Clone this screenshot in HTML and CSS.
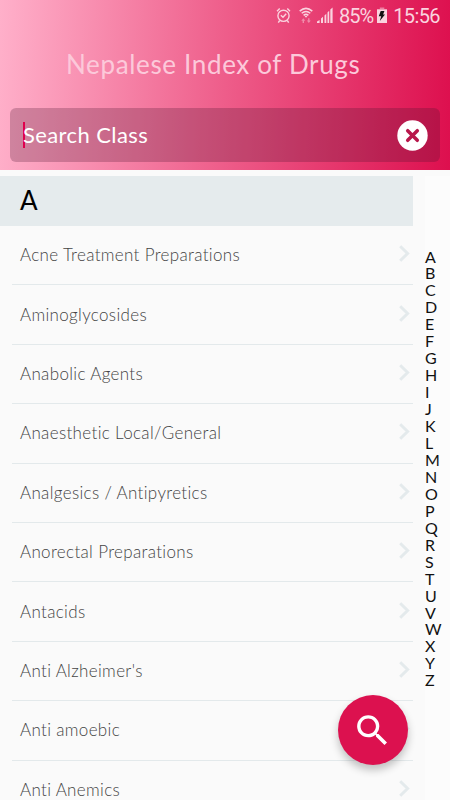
FILE: index.html
```html
<!DOCTYPE html>
<html lang="en">
<head>
    <meta charset="UTF-8">
    <meta name="viewport" content="width=device-width, initial-scale=1.0">
    <title>Nepalese Index of Drugs</title>
    <link rel="stylesheet" href="styles.css">
</head>
<body>
    <div class="app">
        <header class="header">
            <!-- Status bar -->
            <div class="status-bar">
                <svg class="icon-alarm" width="15" height="17" viewBox="0 0 15 17" fill="none" stroke="currentColor" stroke-width="1.4">
                    <circle cx="7.5" cy="8.8" r="5.6"/>
                    <path d="M1 4.2L3.7 1.6M14 4.2L11.3 1.6M3.7 13.5L2.3 15.6M11.3 13.5L12.7 15.6M4.8 8.3L7 10.3L10.2 6.8"/>
                </svg>
                <svg class="icon-wifi" width="14" height="17" viewBox="0 0 14 17" fill="none" stroke="currentColor" stroke-width="1.5">
                    <path d="M.7 4.1Q7 -1.4 13.3 4.1M2.7 6.3Q7 2.6 11.3 6.3M4.6 8.4Q7 6.4 9.4 8.4"/>
                    <path d="M5.6 9L7 10.7L8.4 9Z" fill="currentColor" stroke="none"/>
                    <path d="M2.3 13.8L4.3 11.2L6.3 13.8H5V16H3.6V13.8ZM7.8 13.4H9.1V11.2H10.5V13.4H11.8L9.8 16Z" fill="currentColor" stroke="none" opacity=".5"/>
                </svg>
                <svg class="icon-signal" width="16" height="17" viewBox="0 0 16 17" fill="currentColor">
                    <path d="M0 16V14.6L2.6 13V16ZM4 16V11.6L6 9.8V16ZM7.5 16V8.4L9.3 6.7V16ZM10.5 16V5.4L12.2 3.7V16ZM13.3 16V2.6L15.6 .6V16Z"/>
                </svg>
                <span class="battery-level">85%</span>
                <svg class="icon-battery" width="10" height="17" viewBox="0 0 10 17">
                    <path d="M2.8 .5H7.3V2H2.8Z" fill="currentColor" opacity=".5"/>
                    <path d="M0 2.3H10V16H0Z" fill="currentColor"/>
                    <path d="M3.7 4H7.4L6.1 7.4H8L2.8 14L4.2 9.3H1.8Z" fill="#111"/>
                </svg>
                <span class="clock">15:56</span>
            </div>

            <h1>Nepalese Index of Drugs</h1>

            <!-- Search box -->
            <div class="search-box">
                <span class="cursor"></span>
                <span class="search-text">Search Class</span>
                <svg class="icon-clear" width="31" height="31" viewBox="0 0 31 31">
                    <circle cx="15.5" cy="15.5" r="15.2" fill="#fff"/>
                    <path d="M10.7 10.7L20.3 20.3M20.3 10.7L10.7 20.3" stroke="#b8174b" stroke-width="3.5" stroke-linecap="round"/>
                </svg>
            </div>
        </header>

        <main class="content">
            <!-- Class list -->
            <div class="class-list">
                <h2>A</h2>
                <ul>
                    <li><span>Acne Treatment Preparations</span><svg class="chevron" viewBox="0 0 11 17"><path d="M1.2 1.2L8.6 8.5L1.2 15.8"/></svg></li>
                    <li><span>Aminoglycosides</span><svg class="chevron" viewBox="0 0 11 17"><path d="M1.2 1.2L8.6 8.5L1.2 15.8"/></svg></li>
                    <li><span>Anabolic Agents</span><svg class="chevron" viewBox="0 0 11 17"><path d="M1.2 1.2L8.6 8.5L1.2 15.8"/></svg></li>
                    <li><span>Anaesthetic Local/General</span><svg class="chevron" viewBox="0 0 11 17"><path d="M1.2 1.2L8.6 8.5L1.2 15.8"/></svg></li>
                    <li><span>Analgesics / Antipyretics</span><svg class="chevron" viewBox="0 0 11 17"><path d="M1.2 1.2L8.6 8.5L1.2 15.8"/></svg></li>
                    <li><span>Anorectal Preparations</span><svg class="chevron" viewBox="0 0 11 17"><path d="M1.2 1.2L8.6 8.5L1.2 15.8"/></svg></li>
                    <li><span>Antacids</span><svg class="chevron" viewBox="0 0 11 17"><path d="M1.2 1.2L8.6 8.5L1.2 15.8"/></svg></li>
                    <li><span>Anti Alzheimer's</span><svg class="chevron" viewBox="0 0 11 17"><path d="M1.2 1.2L8.6 8.5L1.2 15.8"/></svg></li>
                    <li><span>Anti amoebic</span><svg class="chevron" viewBox="0 0 11 17"><path d="M1.2 1.2L8.6 8.5L1.2 15.8"/></svg></li>
                    <li><span>Anti Anemics</span><svg class="chevron" viewBox="0 0 11 17"><path d="M1.2 1.2L8.6 8.5L1.2 15.8"/></svg></li>
                </ul>
            </div>

            <!-- Alphabet index -->
            <nav class="alphabet">
                <span>A</span><span>B</span><span>C</span><span>D</span><span>E</span><span>F</span><span>G</span><span>H</span><span>I</span><span>J</span><span>K</span><span>L</span><span>M</span><span>N</span><span>O</span><span>P</span><span>Q</span><span>R</span><span>S</span><span>T</span><span>U</span><span>V</span><span>W</span><span>X</span><span>Y</span><span>Z</span>
            </nav>
        </main>

        <button class="fab" aria-label="Search">
            <svg width="41" height="41" viewBox="0 0 24 24" fill="#fff">
                <path d="M15.5 14h-.79l-.28-.27A6.471 6.471 0 0 0 16 9.5 6.5 6.5 0 1 0 9.5 16c1.61 0 3.09-.59 4.23-1.57l.27.28v.79l5 4.99L20.49 19l-4.99-5zm-6 0C7.01 14 5 11.99 5 9.5S7.01 5 9.5 5 14 7.01 14 9.5 11.99 14 9.5 14z"/>
            </svg>
        </button>
    </div>
</body>
</html>
```

FILE: styles.css
```css
/* General Styling */
* {
    box-sizing: border-box;
}
body {
    font-family: Lato, "Open Sans", sans-serif;
    background-color: #fafafa;
    margin: 0;
    padding: 0;
    overflow: hidden;
}
.app {
    position: relative;
    width: 450px;
    height: 800px;
    overflow: hidden;
}

/* Header */
.header {
    height: 170px;
    padding: 0 10px;
    background: linear-gradient(92deg, #ffb0ca 0%, #ee5d8a 50%, #dd0f4e 100%);
}
.status-bar {
    display: flex;
    justify-content: flex-end;
    align-items: center;
    height: 31px;
    font-family: Roboto, sans-serif;
    font-size: 20px;
    color: #fad3df;
}
.icon-wifi {
    margin-left: 8px;
}
.icon-signal {
    margin-left: 4px;
}
.battery-level {
    margin-left: 6px;
    letter-spacing: -1px;
}
.icon-battery {
    margin-left: 4px;
}
.clock {
    margin-left: 6px;
    letter-spacing: -0.6px;
}
h1 {
    margin: 0;
    padding-left: 56px;
    height: 77px;
    line-height: 67px;
    font-size: 26px;
    font-weight: 400;
    letter-spacing: 0.65px;
    white-space: nowrap;
    color: #fcc9da;
}

/* Search Box */
.search-box {
    display: flex;
    align-items: center;
    height: 54px;
    padding: 0 12px;
    border-radius: 6px;
    background-color: rgba(75, 20, 45, 0.26);
}
.cursor {
    width: 2px;
    height: 26px;
    margin-left: 1px;
    margin-right: -2px;
    background-color: #e0004d;
}
.search-text {
    flex: 1;
    font-size: 22px;
    line-height: 52px;
    letter-spacing: 0.4px;
    color: #fff;
}

/* Class List */
.content {
    display: flex;
    height: 630px;
}
.class-list {
    width: 412.5px;
    padding-top: 6px;
}
h2 {
    margin: 0;
    padding-left: 20px;
    height: 50px;
    line-height: 48px;
    font-size: 26px;
    font-weight: 400;
    color: #000;
    background-color: #e5ebed;
}
ul {
    list-style: none;
    margin: 0;
    padding: 0 0 0 12px;
}
li {
    display: flex;
    align-items: center;
    justify-content: space-between;
    height: 59.4px;
    padding: 0 3px 1px 8px;
    border-bottom: 1px solid #e3e9eb;
    font-size: 17px;
    font-weight: 300;
    letter-spacing: 0.34px;
    color: #444;
}
.chevron {
    width: 11px;
    height: 17px;
    margin-bottom: 2px;
    fill: none;
    stroke: #e4eaec;
    stroke-width: 3;
}

/* Alphabet Index */
.alphabet {
    display: flex;
    flex-direction: column;
    margin: 6px 0 0 12.5px;
    padding-top: 72.5px;
    width: 25px;
    background-color: #fcfcfc;
    font-size: 16px;
    line-height: 16.95px;
    color: #111;
}

/* Floating Search Button */
.fab {
    position: absolute;
    left: 337.5px;
    top: 695px;
    display: flex;
    align-items: center;
    justify-content: center;
    width: 70px;
    height: 70px;
    padding: 0;
    border: none;
    border-radius: 50%;
    background-color: #dc114f;
    box-shadow: 0 5px 9px rgba(0, 0, 0, 0.24);
}
```
